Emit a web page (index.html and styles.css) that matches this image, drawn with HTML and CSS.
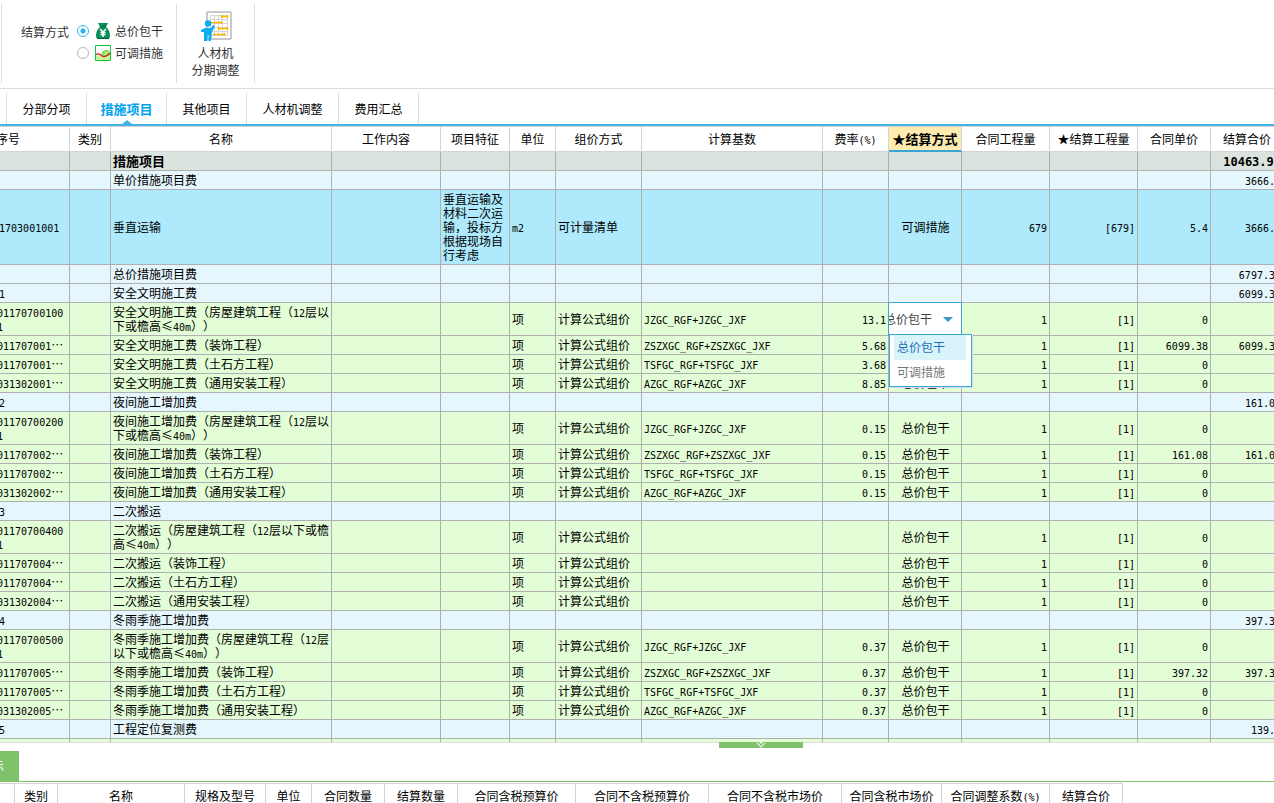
FILE: index.html
```
<!DOCTYPE html>
<html lang="zh-CN">
<head>
<meta charset="utf-8">
<title>措施项目</title>
<link rel="stylesheet" href="styles.css">
</head>
<body>
<header class="ribbon">
  <fieldset class="group settle">
    <legend class="caption">结算方式</legend>
    <div class="choices">
      <label class="choice"><input type="radio" name="mode" checked>
        <svg width="16" height="17" viewBox="0 0 16 17"><path d="M3 0h10l-2 4H5z" fill="#0a8f5c"/><path d="M5 4h6c3 2 4 6 4 9q0 3-3 3H4q-3 0-3-3c0-3 1-7 4-9z" fill="#0a8f5c"/><path d="M5 3.5h6M2 15.500h12" stroke="#04663f"/><path d="M5 6l3 3 3-3M8 9v5M5.500 9.500h5M5.500 11.500h5" stroke="#fff" stroke-width="1.500" fill="none"/></svg>
        <span>总价包干</span></label>
      <label class="choice"><input type="radio" name="mode">
        <svg width="16" height="16" viewBox="0 0 16 16"><path d="M.5.5h15v15H.5z" fill="#fff"/><path d="M1 11q3-3 6-1 3 2 8-1v6H1z" fill="#c8f59a"/><path d="M7 10q0-4 3.500-4.500T15 9q-2 2-5 2z" fill="#a8ea70" stroke="#5fcf3a"/><path d="M1 9.500c3-2 4 0 6 1.500s5 0 8-3" stroke="#e02020" stroke-width="1.200" fill="none"/><path d="M.5.5h15v15H.5z" fill="none" stroke="#14c43c"/></svg>
        <span>可调措施</span></label>
    </div>
  </fieldset>
  <button class="group big" type="button">
    <svg width="32" height="32" viewBox="0 0 32 32"><rect x="7" y="1" width="24" height="27" rx="1" fill="#fff" stroke="#b8b8b8" stroke-width="1.500"/><path d="M10.500 4v21M14.500 4v21M18.500 4v21M22.500 4v21M27.500 4v21M10 4.500h18M10 8.500h18M10 12.500h18M10 16.500h18M10 20.500h18M10 24.500h18" stroke="#d4d4d4" fill="none"/><path d="M21 5.500h7M11 11.500h10M18 17.500h10M13 23.500h12M21.500 4v3M27.500 4v3M21.500 10v3M27.500 16v3M18.500 16v3M24.500 22v3" stroke="#ffb400" stroke-width="1.500" fill="none"/><circle cx="8" cy="12.500" r="3.200" fill="#0aaef5"/><path d="M1 19l4-2h6l2-3 2 1-3 6-1 9H8.500v-6h-1v6H4v-9H1z" fill="#0aaef5"/></svg>
    <span>人材机</span><span>分期调整</span>
  </button>
</header>
<nav class="tabs">
  <button type="button" class="tab">分部分项</button>
  <button type="button" class="tab on">措施项目</button>
  <button type="button" class="tab">其他项目</button>
  <button type="button" class="tab wide">人材机调整</button>
  <button type="button" class="tab">费用汇总</button>
</nav>
<main class="pane">
<table class="grid main">
<colgroup><col class="c0"><col class="c1"><col class="c2"><col class="c3"><col class="c4"><col class="c5"><col class="c6"><col class="c7"><col class="c8"><col class="c9"><col class="c10"><col class="c10"><col class="c9"><col class="c9"></colgroup>
<thead><tr><th>序号</th><th>类别</th><th>名称</th><th>工作内容</th><th>项目特征</th><th>单位</th><th>组价方式</th><th>计算基数</th><th>费率<span class="n">(%)</span></th><th class="hot">★结算方式</th><th>合同工程量</th><th>★结算工程量</th><th>合同单价</th><th>结算合价</th></tr></thead>
<tbody id="rows"></tbody>
</table>
</main>
<section class="detail">
  <button type="button" class="handle" aria-label="收起"><svg width="12" height="6" viewBox="0 0 12 6"><path d="M4 0h4L6 2z" fill="#fff"/><path d="M2 1l4 4 4-4" fill="none" stroke="#e8f5e3" stroke-width="1.200"/></svg></button>
  <div class="bar"><button type="button" class="hint">提示</button></div>
  <div class="under">
  <table class="grid sub">
  <colgroup><col class="d0"><col class="d1"><col class="d2"><col class="d3"><col class="c5"><col class="c9"><col class="c9"><col class="d4"><col class="d5"><col class="d5"><col class="d6"><col class="d7"><col class="c9"></colgroup>
  <thead><tr><th></th><th>类别</th><th>名称</th><th>规格及型号</th><th>单位</th><th>合同数量</th><th>结算数量</th><th>合同含税预算价</th><th>合同不含税预算价</th><th>合同不含税市场价</th><th>合同含税市场价</th><th>合同调整系数<span class="n">(%)</span></th><th>结算合价</th></tr></thead>
  </table>
  </div>
</section>
<script src="grid.js"></script>
</body>
</html>
```
FILE: grid.js
```
// kind, code, name, feature, unit, pricing, base, rate, mode, qty, settled qty, price, total
const house = '（房屋建筑工程（12层以下或檐高≤40m））';
const rows = [
  ['root', '', '措施项目', '', '', '', '', '', '', '', '', '', '10463.98'],
  ['head', '', '单价措施项目费', '', '', '', '', '', '', '', '', '', '3666.6'],
  ['pick', '011703001001', '垂直运输', '垂直运输及材料二次运输，投标方根据现场自行考虑', 'm2', '可计量清单', '', '', '可调措施', '679', '[679]', '5.4', '3666.6'],
  ['head', '', '总价措施项目费', '', '', '', '', '', '', '', '', '', '6797.38']
];
function section(no, name, total, codes, rate, price, based) {
  rows.push(['head', no, name, '', '', '', '', '', '', '', '', '', total]);
  const kinds = [house, '（装饰工程）', '（土石方工程）', '（通用安装工程）'];
  const bases = ['JZGC', 'ZSZXGC', 'TSFGC', 'AZGC'];
  kinds.forEach((kind, i) => rows.push(['item', codes[i], name + kind, '', '项', '计算公式组价',
    based ? `${bases[i]}_RGF+${bases[i]}_JXF` : '', rate[i], '总价包干', '1', '[1]',
    i === 1 ? price : '0', i === 1 && price !== '0' ? price : '']));
}
const codes = k => [`01170700${k}001`, `01170700${k}…`, `01170700${k}…`, `03130200${k}…`];
section('1', '安全文明施工费', '6099.38', codes(1), ['13.1', '5.68', '3.68', '8.85'], '6099.38', true);
section('2', '夜间施工增加费', '161.08', codes(2), Array(4).fill('0.15'), '161.08', true);
section('3', '二次搬运', '', codes(4), Array(4).fill(''), '0', false);
section('4', '冬雨季施工增加费', '397.32', codes(5), Array(4).fill('0.37'), '397.32', true);
rows.push(['head', '5', '工程定位复测费', '', '', '', '', '', '', '', '', '', '139.6']);
rows.push(['item', '', '', '', '', '', '', '', '', '', '', '', '']);

const latin = text => text.replace(/[\x20-\x7e]+/g, run => `<span class="n">${run}</span>`);
const editor = `<select class="editor" aria-label="结算方式"><option>总价包干</option><option>可调措施</option></select>
  <svg class="arrow" width="10" height="5" viewBox="0 0 10 5"><path d="M0 0h10L5 5z" fill="#3a94c4"/></svg>
  <ul class="options" role="listbox"><li role="option" aria-selected="true">总价包干</li><li role="option">可调措施</li></ul>`;
const align = ['code', '', '', '', '', '', '', '', 'r', 'c', 'r', 'r', 'r', 'r'];
document.getElementById('rows').innerHTML = rows.map((row, n) => {
  const cells = [row[1], '', row[2], '', ...row.slice(3)];
  return `<tr class="${row[0]}">` + cells.map((text, i) => {
    const editing = n === 5 && i === 9;
    const cut = i === 0 && text.endsWith('…');
    return `<td class="${align[i]}${editing ? ' editing' : ''}${cut ? ' cut' : ''}">${editing ? editor : latin(text)}</td>`;
  }).join('') + '</tr>';
}).join('');
```
FILE: styles.css
```
* { box-sizing: border-box; }
body {
  margin: 0;
  height: 100vh;
  display: flex;
  flex-direction: column;
  overflow: hidden;
  background: #fff;
  color: #000;
  font: 12px/14px "Noto Sans CJK SC", sans-serif;
  text-spacing-trim: space-all;
}
button, select, input { font: inherit; color: inherit; margin: 0; }
button { border: 0; background: none; padding: 0; }
.n { font-family: "DejaVu Sans Mono", monospace; font-size: 10px; line-height: 0; }

.ribbon { display: flex; padding: 4px 0 5px 1px; border-bottom: 1px solid #ddd; color: #333; }
.group { height: 79px; border: 0; border-right: 1px solid #ddd; margin: 0; }
.settle { display: flex; gap: 8px; padding: 17px 13px 0 19px; border-left: 1px solid #ddd; min-width: 0; }
.caption { float: left; padding: 4px 0 0; }
.choices { display: grid; gap: 2px; align-content: start; }
.choice { display: flex; align-items: center; height: 20px; }
.choice svg { margin: 0 4px 0 6px; }
.choice input {
  appearance: none;
  width: 12px;
  height: 12px;
  border: 1px solid #b4b4b4;
  border-radius: 50%;
  background: #fff;
}
.choice input:checked { border-color: #2fb5ee; background: radial-gradient(circle, #1eb4f5 0 2px, #fff 3px); }
.big { width: 78px; padding: 7px 0 0; display: flex; flex-direction: column; align-items: center; line-height: 17px; }
.big svg { margin-bottom: 1px; }

.tabs { display: flex; padding: 4px 0 0 6px; border-bottom: 2px solid #41b4e3; }
.tab { width: 80px; height: 31px; border-right: 1px solid #ddd; position: relative; }
.tab:first-child { width: 81px; border-left: 1px solid #ddd; }
.tab.wide { width: 92px; }
.tab.on { color: #00a2ec; font-weight: bold; font-size: 13px; }
.tab.on::after {
  content: "";
  position: absolute;
  left: 35px;
  bottom: 0;
  border: 5px solid transparent;
  border-top: 0;
  border-bottom: 4px solid #41b4e3;
}

.pane { flex: 1; min-height: 0; overflow: hidden; border-top: 1px solid #d4d4d4; }
.grid { table-layout: fixed; border-collapse: separate; border-spacing: 0; width: 0; }
.main { margin-left: -53px; }
.grid th { height: 25px; padding: 0; font-weight: normal; border-right: 1px solid #d4d4d4; border-bottom: 1px solid #d4d4d4; white-space: nowrap; }
.grid th.hot { background: #ffebaf; font-weight: bold; font-size: 13px; border-bottom: 2px solid #3aa6d6; }
.grid td { height: 19px; padding: 2px 1px 2px 2px; border-right: 1px solid #b0b0b0; border-bottom: 1px solid #b0b0b0; }
.grid td.r { text-align: right; padding-right: 2px; }
.grid td.c { text-align: center; }
.grid td.code { padding-left: 50px; padding-right: 4px; word-break: break-all; }
.grid td.cut { white-space: nowrap; }
.head td.code { padding-left: 52px; }
.grid .pick td.code { padding-left: 40px; }
.root { background: #dae3de; font-weight: bold; }
.root td { font-size: 13px; }
.root .n { font-size: 12px; }
.head { background: #e5f6fc; }
.pick { background: #aee9fc; }
.item { background: #e3fdd6; }

.grid td.editing { position: relative; }
.editor {
  appearance: none;
  position: absolute;
  inset: -1px;
  border: 1px solid #3aa6d6;
  border-radius: 0;
  background: #fff;
  color: #444;
  padding: 0;
  text-indent: -5px;
}
.arrow { position: absolute; right: 8px; top: 14px; }
.options {
  position: absolute;
  z-index: 1;
  left: 0;
  top: 31px;
  width: 83px;
  margin: 0;
  padding: 0 5px 1px 4px;
  list-style: none;
  background: #fff;
  border: 1px solid #3aa6d6;
  box-shadow: 1px 1px 0 #d5dcf0;
  text-align: left;
  line-height: 24px;
  color: #777;
}
.options li { padding-left: 3px; height: 25px; }
.options li[aria-selected] { background: #d9f3fb; color: #1b6fb5; }

.detail { height: 61px; border-top: 1px solid #ddd; position: relative; }
.handle { position: absolute; top: -1px; left: 719px; width: 84px; height: 6px; background: #7fc269; display: flex; justify-content: center; }
.bar { padding-top: 8px; border-bottom: 1px solid #7fc269; }
.hint { display: block; width: 47px; height: 30px; margin-left: -28px; background: #7fc269; color: #fff; text-align: left; padding-left: 8px; }
.under { margin-top: 1px; border-top: 1px solid #d4d4d4; width: fit-content; }

.c0 { width: 123px; } .c1 { width: 41px; } .c2 { width: 221px; } .c3 { width: 109px; }
.c4 { width: 69px; } .c5 { width: 46px; } .c6 { width: 86px; } .c7 { width: 181px; }
.c8 { width: 66px; } .c9 { width: 73px; } .c10 { width: 88px; }
.d0 { width: 15px; } .d1 { width: 43px; } .d2 { width: 127px; } .d3 { width: 81px; }
.d4 { width: 118px; } .d5 { width: 133px; } .d6 { width: 100px; } .d7 { width: 108px; }
```
